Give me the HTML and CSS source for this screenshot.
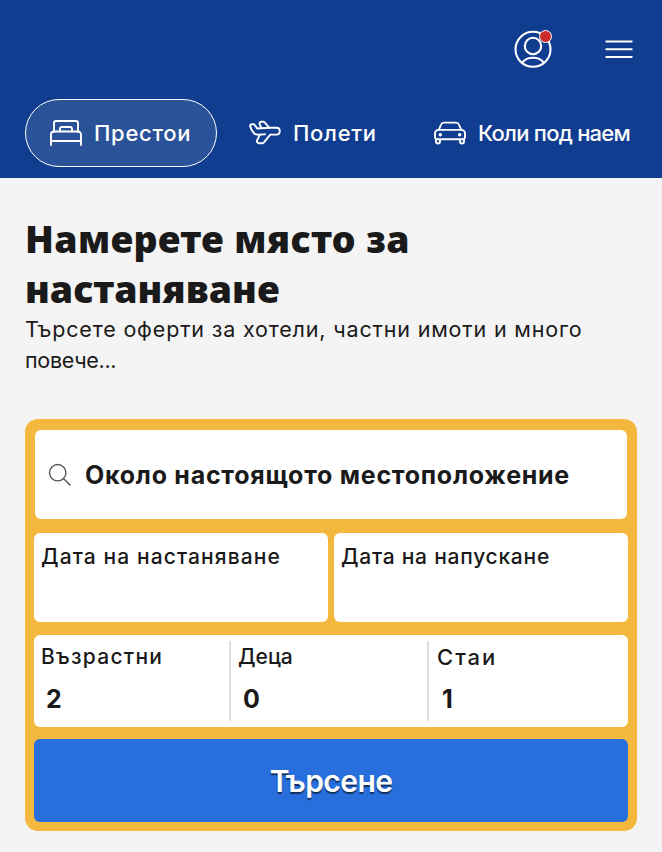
FILE: index.html
```html
<!DOCTYPE html>
<html lang="bg">
<head>
    <meta charset="UTF-8">
    <meta name="viewport" content="width=device-width, initial-scale=1.0">
    <title>Престои</title>
    <link rel="stylesheet" href="styles.css">
</head>
<body>
<header class="header">
    <div class="header-icons">
        <button class="icon-btn account" aria-label="Профил">
            <svg width="38" height="38" viewBox="0 0 38 38" fill="none" stroke="#fff" stroke-width="2.1">
                <circle cx="19" cy="19.3" r="17.5"/>
                <circle cx="19" cy="16" r="8.2"/>
                <path d="M8.2 32.6C10.6 29.6 14.5 27.8 19 27.8s8.4 1.8 10.8 4.8"/>
            </svg>
            <span class="badge"></span>
        </button>
        <button class="icon-btn" aria-label="Меню">
            <svg width="28" height="20" viewBox="0 0 28 20" stroke="#fff" stroke-width="1.9">
                <path d="M.5 2.5h27M.5 10.2h27M.5 18h27"/>
            </svg>
        </button>
    </div>
    <nav class="tabs">
        <a href="#" class="tab active">
            <svg width="32" height="28" viewBox="0 0 32 28" fill="none" stroke="#fff" stroke-width="1.9" stroke-linecap="round" stroke-linejoin="round">
                <path d="M4 13V4a2 2 0 0 1 2-2h20a2 2 0 0 1 2 2v9"/>
                <path d="M10 12.5V10a2 2 0 0 1 2-2h8a2 2 0 0 1 2 2v2.5"/>
                <path d="M1 26V15.500a3 3 0 0 1 3-3h24a3 3 0 0 1 3 3V26M1 22h30"/>
            </svg>
            <span class="stays">Престои</span>
        </a>
        <a href="#" class="tab">
            <svg width="32" height="26" viewBox="0 0 32 26" fill="none" stroke="#fff" stroke-width="1.9" stroke-linecap="round" stroke-linejoin="round">
                <path d="M16 14.2l-5 .4H8.3c-1.4 0-2.7-.6-3.6-1.7-1.7-2-2.900-4.200-3.500-6.700C.9 5 1.600 4.300 2.700 4.300h1.600c.7 0 1.300.3 1.700.9l2.200 3.300 12.100-.7h7.200c4.400 0 4.400 6.800 0 6.800h-6.300l-6.200 7.700c-.4.600-1 .9-1.700.9H10c-1.600 0-2.500-1.400-1.900-2.800l2.800-5.800"/>
                <path d="M12.500 8l-1.700-3.400c-.8-1.500 0-2.800 1.500-2.800h1.900c.6 0 1.100.2 1.500.6l4.600 5.400"/>
            </svg>
            <span class="flights">Полети</span>
        </a>
        <a href="#" class="tab">
            <svg width="32" height="24" viewBox="0 0 32 24" fill="none" stroke="#fff" stroke-width="1.9" stroke-linecap="round" stroke-linejoin="round">
                <path d="M4.8 8.9L7.100 3.500A3 3 0 0 1 9.900 1.600h12.200a3 3 0 0 1 2.800 1.900l2.300 5.400"/>
                <path d="M2 18.3v2.200a2 2 0 0 0 4 0v-2.200h20v2.200a2 2 0 0 0 4 0v-2.200l1-2.300v-3.600a3.500 3.500 0 0 0-3.500-3.500h-23A3.500 3.500 0 0 0 1 12.400V16a2.300 2.300 0 0 0 2.300 2.300H28.700A2.300 2.300 0 0 0 31 16"/>
                <circle cx="6.3" cy="13.700" r=".8" fill="#fff"/>
                <circle cx="25.7" cy="13.700" r=".8" fill="#fff"/>
            </svg>
            <span class="cars">Коли под наем</span>
        </a>
    </nav>
</header>
<main class="content">
    <h1 class="title"><span class="title-first">Намерете място за</span><br><span class="title-second">настаняване</span></h1>
    <p class="subtitle"><span class="subtitle-first">Търсете оферти за хотели, частни имоти и много</span><br><span class="subtitle-second">повече...</span></p>
    <form class="search-box">
        <div class="field destination">
            <svg width="24" height="24" viewBox="0 0 24 24" fill="none" stroke="#555" stroke-width="1.4" stroke-linecap="round">
                <circle cx="9.7" cy="9.7" r="8.2"/>
                <path d="M15.7 15.7L22 22"/>
            </svg>
            <span class="place">Около настоящото местоположение</span>
        </div>
        <div class="dates">
            <div class="field date"><label class="checkin">Дата на настаняване</label></div>
            <div class="field date"><label class="checkout">Дата на напускане</label></div>
        </div>
        <div class="field guests">
            <div class="guest">
                <label class="adults">Възрастни</label>
                <strong>2</strong>
            </div>
            <div class="guest">
                <label class="children">Деца</label>
                <strong>0</strong>
            </div>
            <div class="guest">
                <label class="rooms">Стаи</label>
                <strong>1</strong>
            </div>
        </div>
        <button type="button" class="search-btn"><span>Търсене</span></button>
    </form>
</main>
</body>
</html>
```
FILE: styles.css
```css
* {
    margin: 0;
    padding: 0;
    box-sizing: border-box;
}
body {
    font-family: Inter, "Noto Sans", sans-serif;
    background: #f4f4f4;
    color: #1a1a1a;
    height: 852px;
    overflow: hidden;
}
span, label {
    white-space: nowrap;
}
.header {
    height: 178px;
    background: #113d90;
    color: #fff;
    padding: 30px 25px 0;
}
.header-icons {
    display: flex;
    justify-content: flex-end;
    align-items: center;
    gap: 53px;
    height: 38px;
    padding-right: 4px;
}
.icon-btn {
    display: flex;
    position: relative;
    background: none;
    border: none;
}
.badge {
    position: absolute;
    top: 0;
    right: 0;
    width: 13px;
    height: 13px;
    border: 1px solid #fff;
    border-radius: 50%;
    background: #cb2a2a;
}
.tabs {
    display: flex;
    margin-top: 31px;
}
.tab {
    flex: none;
    display: flex;
    align-items: center;
    gap: 12px;
    height: 68px;
    color: #fff;
    text-decoration: none;
    font-size: 22px;
    font-weight: 500;
}
.tab svg {
    flex: none;
}
.tab.active {
    width: 192px;
    padding-left: 24px;
    margin-right: 32px;
    border: 1.5px solid #fff;
    border-radius: 34px;
    background: #2a5298;
}
.tab:nth-child(2) {
    width: 185px;
}
.stays, .flights {
    letter-spacing: 0.7px;
}
.cars {
    letter-spacing: -0.75px;
}
.content {
    padding: 36px 25px 0;
}
.title {
    font-family: "Noto Sans", sans-serif;
    font-size: 37.5px;
    line-height: 50px;
    font-weight: 900;
}
.title-first {
    letter-spacing: 0.35px;
}
.subtitle {
    font-size: 21.5px;
    line-height: 31px;
    letter-spacing: 0.83px;
}
.subtitle-second {
    letter-spacing: -0.3px;
}
.search-box {
    display: flex;
    flex-direction: column;
    height: 412px;
    margin-top: 43px;
    padding: 11px 9px 9px;
    background: #f5b83f;
    border-radius: 13px;
}
.field {
    background: #fff;
    border-radius: 6px;
}
.destination {
    display: flex;
    align-items: center;
    gap: 13px;
    height: 89px;
    margin: 0 1px;
    padding-left: 13px;
    font-size: 25px;
    font-weight: 700;
    letter-spacing: 0.73px;
}
.dates {
    display: grid;
    grid-template-columns: 1fr 1fr;
    gap: 6px;
    margin-top: 14px;
}
.date {
    height: 89px;
    padding: 9px 7px;
}
label {
    display: block;
    font-size: 21px;
    line-height: 30px;
    font-weight: 500;
}
.checkin {
    letter-spacing: 1.1px;
}
.adults {
    letter-spacing: 1.25px;
}
.checkout {
    letter-spacing: 0.75px;
}
.rooms {
    font-size: 22px;
    letter-spacing: 2px;
}
.guests {
    display: flex;
    height: 92px;
    margin-top: 13px;
    padding: 6px 0;
}
.guest {
    width: 198px;
    padding: 1px 8px;
    border-right: 2px solid #dedede;
}
.guest:first-child {
    width: 197px;
    padding-left: 7px;
}
.guest:nth-child(2) {
    padding-left: 7px;
}
.guest:last-child {
    border-right: none;
}
.guest strong {
    display: block;
    margin: 10px 0 0 5px;
    font-size: 25px;
    line-height: 34px;
    font-weight: 700;
}
.search-btn {
    height: 83px;
    margin-top: 12px;
    border: none;
    border-radius: 6px;
    background: #286fdd;
    color: #fff;
    font-family: inherit;
    font-size: 30px;
    font-weight: 600;
    letter-spacing: -0.6px;
    text-shadow: 0 2px 1px #12305f;
}
```
